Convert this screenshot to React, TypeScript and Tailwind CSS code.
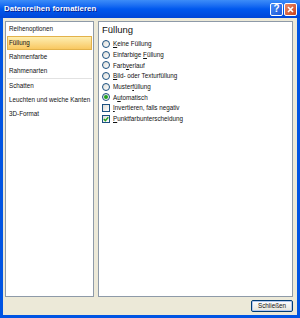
const font = { fontFamily: '"Liberation Sans", Arial, sans-serif' };

function Key({ text, k }: { text: string; k: number }) {
  return (
    <span className="whitespace-nowrap">
      {text.slice(0, k)}
      <span className="underline">{text[k]}</span>
      {text.slice(k + 1)}
    </span>
  );
}

function Radio({ checked }: { checked?: boolean }) {
  return (
    <span className="relative flex h-[8px] w-[8px] shrink-0 items-center justify-center rounded-full border border-[#1c5180] bg-gradient-to-br from-[#dcdcd6] to-white">
      {checked && <span className="h-[4px] w-[4px] rounded-full bg-[#21a121]" />}
    </span>
  );
}

function Check({ checked }: { checked?: boolean }) {
  return (
    <span className="flex h-[8px] w-[8px] shrink-0 items-center justify-center border border-[#1c5180] bg-gradient-to-br from-[#dcdcd6] to-white">
      {checked && (
        <svg width="6" height="6" viewBox="0 0 6 6">
          <path d="M0.8 3 L2.4 4.6 L5.3 1.2" stroke="#21a121" strokeWidth="1.4" fill="none" />
        </svg>
      )}
    </span>
  );
}

const navItems = ['Reihenoptionen', 'Füllung', 'Rahmenfarbe', 'Rahmenarten', '-', 'Schatten', 'Leuchten und weiche Kanten', '3D-Format'];

const options: { text: string; k: number; kind: 'radio' | 'check'; on?: boolean }[] = [
  { text: 'Keine Füllung', k: 0, kind: 'radio' },
  { text: 'Einfarbige Füllung', k: 11, kind: 'radio' },
  { text: 'Farbverlauf', k: 4, kind: 'radio' },
  { text: 'Bild- oder Texturfüllung', k: 0, kind: 'radio' },
  { text: 'Musterfüllung', k: 6, kind: 'radio' },
  { text: 'Automatisch', k: 1, kind: 'radio', on: true },
  { text: 'Invertieren, falls negativ', k: 0, kind: 'check' },
  { text: 'Punktfarbunterscheidung', k: 0, kind: 'check', on: true },
];

export default function App() {
  return (
    <div className="flex h-[318px] w-[300px] flex-col bg-[#0054e3]" style={font}>
      {/* title bar */}
      <div className="flex h-[18px] shrink-0 items-center justify-between bg-gradient-to-b from-[#3c8cf8] via-[#0058ee] to-[#0046d8] pl-[4px] pr-[3px]">
        <span className="whitespace-nowrap text-[7.8px] font-bold tracking-[0.1px] text-white [text-shadow:1px_1px_0_#0a1e8c]">Datenreihen formatieren</span>
        <div className="flex gap-[1px]">
          <span className="flex h-[13px] w-[13px] items-center justify-center rounded-[2px] border border-white bg-gradient-to-br from-[#4a8cf7] to-[#1d57d8] text-[10px] font-bold leading-none text-white">?</span>
          <span className="flex h-[13px] w-[13px] items-center justify-center rounded-[2px] border border-white bg-gradient-to-br from-[#e88a68] to-[#c8401a]">
            <svg width="7" height="7" viewBox="0 0 7 7">
              <path d="M1 1 L6 6 M6 1 L1 6" stroke="white" strokeWidth="1.6" />
            </svg>
          </span>
        </div>
      </div>

      {/* body */}
      <div className="mx-[3px] mb-[3px] flex flex-1 flex-col bg-[#ece9d8] pl-[2px] pr-[4px] pt-[3px]">
        <div className="flex h-[276px] gap-[4px]">
          <div className="flex w-[89px] shrink-0 flex-col overflow-hidden border border-[#8e9aa8] bg-white text-[6.3px] text-[#111]">
            {navItems.map((n, i) =>
              n === '-' ? (
                <div key={i} className="mx-[1px] h-[1px] shrink-0 bg-[#e2e2e2]" />
              ) : (
                <div
                  key={i}
                  className={
                    'mx-[1px] flex h-[14px] shrink-0 items-center whitespace-nowrap ' +
                    (n === 'Füllung' ? 'border border-[#e3b24a] bg-gradient-to-b from-[#fdeeb0] to-[#f8c860] pl-[1px]' : 'pl-[2px]')
                  }
                >
                  {n}
                </div>
              ),
            )}
          </div>
          <div className="flex flex-1 flex-col border border-[#8e9aa8] bg-white pl-[3px] pt-[1px] text-[6.3px] text-[#111]">
            <div className="flex h-[14px] items-center text-[9.5px] leading-none">Füllung</div>
            <div className="mt-[1.5px] flex flex-col">
              {options.map((o, i) => (
                <div key={i} className="flex h-[10.7px] items-center gap-[3px]">
                  {o.kind === 'radio' ? <Radio checked={o.on} /> : <Check checked={o.on} />}
                  <Key text={o.text} k={o.k} />
                </div>
              ))}
            </div>
          </div>
        </div>
        <div className="flex justify-end pt-[3px]">
          <button className="flex h-[12px] w-[42px] items-center justify-center rounded-[2px] border border-[#003c74] bg-gradient-to-b from-white to-[#e6e5dc] text-[6.3px] text-[#111] shadow-[inset_0_0_0_1px_#b4c8f0]">
            Schließen
          </button>
        </div>
      </div>
    </div>
  );
}
